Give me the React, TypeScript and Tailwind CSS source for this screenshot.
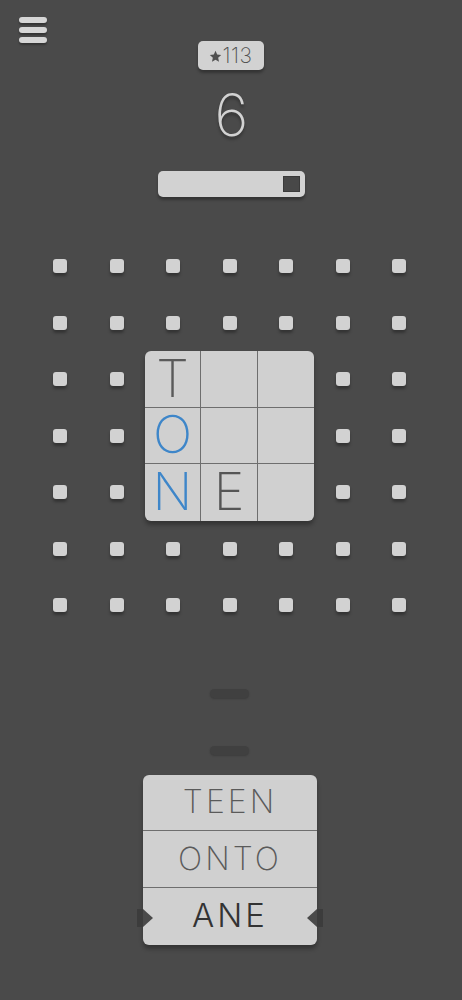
import React from "react";

const font = { fontFamily: "Inter, 'Open Sans', sans-serif" };

function Dot() {
  return <div className="w-[14px] h-[14px] rounded-[3px] bg-[#d2d2d2] shadow-[0_3px_3px_rgba(0,0,0,0.3)]" />;
}

export default function App() {
  const cells: React.ReactNode[] = [];
  for (let r = 0; r < 7; r++) {
    for (let c = 0; c < 7; c++) {
      if (r >= 2 && r <= 4 && c >= 2 && c <= 4) continue;
      cells.push(
        <div key={`${r}-${c}`} className="flex items-center justify-center" style={{ gridRow: r + 1, gridColumn: c + 1 }}>
          <Dot />
        </div>
      );
    }
  }
  const tiles: { ch: string; color: string }[] = [
    { ch: "T", color: "text-[#5a5a5a]" },
    { ch: "", color: "" },
    { ch: "", color: "" },
    { ch: "O", color: "text-[#3e86c9]" },
    { ch: "", color: "" },
    { ch: "", color: "" },
    { ch: "N", color: "text-[#3e86c9]" },
    { ch: "E", color: "text-[#555555]" },
    { ch: "", color: "" },
  ];
  return (
    <div className="relative w-full min-h-[1000px] bg-[#4a4a4a] flex flex-col items-center" style={font}>
      <button className="absolute left-[19px] top-[17px] flex flex-col gap-[4px]">
        <span className="block w-[28px] h-[6px] rounded-full bg-[#d6d6d6] shadow-[0_2px_2px_rgba(0,0,0,0.3)]" />
        <span className="block w-[28px] h-[6px] rounded-full bg-[#d6d6d6] shadow-[0_2px_2px_rgba(0,0,0,0.3)]" />
        <span className="block w-[28px] h-[6px] rounded-full bg-[#d6d6d6] shadow-[0_2px_2px_rgba(0,0,0,0.3)]" />
      </button>

      <div className="mt-[41px] ml-[-1px] w-[66px] h-[29px] rounded-[5px] bg-[#d2d2d2] shadow-[0_3px_3px_rgba(0,0,0,0.3)] flex items-center justify-center gap-[1px] text-[#505050]">
        <svg width="13" height="13" viewBox="0 0 24 24" className="mt-[1px]">
          <path d="M12 1.5l3.1 6.9 7.4.8-5.6 5 1.6 7.4L12 17.8 5.5 21.6l1.6-7.4-5.6-5 7.4-.8z" fill="#505050" />
        </svg>
        <span className="text-[21px] leading-none font-extralight tracking-[0.5px]">113</span>
      </div>

      <div className="mt-[16px] ml-[1px] text-[58px] leading-none font-extralight text-[#d2d2d2] [text-shadow:0_3px_3px_rgba(0,0,0,0.3)]">6</div>

      <div className="mt-[27px] ml-[1px] w-[147px] h-[26px] rounded-[5px] bg-[#d2d2d2] shadow-[0_3px_3px_rgba(0,0,0,0.3)] flex items-center justify-end pr-[5px]">
        <div className="w-[17px] h-[16px] bg-[#484848] border border-[#3a3a3a]" />
      </div>

      <div
        className="mt-[41px] ml-[-3px] grid"
        style={{ gridTemplateColumns: "repeat(7, 56.5px)", gridTemplateRows: "repeat(7, 56.5px)" }}
      >
        {cells}
        <div
          className="row-start-3 row-span-3 col-start-3 col-span-3 rounded-[6px] bg-[#d0d0d0] shadow-[0_4px_4px_rgba(0,0,0,0.3)] grid grid-cols-3 grid-rows-3"
        >
          {tiles.map((t, i) => (
            <div
              key={i}
              className={`flex items-center justify-center text-[52px] leading-none font-extralight ${t.color} ${i % 3 !== 2 ? "border-r border-[#6e6e6e]" : ""} ${i < 6 ? "border-b border-[#6e6e6e]" : ""}`}
            >
              {t.ch}
            </div>
          ))}
        </div>
      </div>

      <div className="mt-[55px] ml-[-3px] w-[39px] h-[9px] rounded-full bg-[#404040] shadow-[0_1px_2px_rgba(0,0,0,0.2)]" />
      <div className="mt-[48px] ml-[-3px] w-[39px] h-[9px] rounded-full bg-[#404040] shadow-[0_1px_2px_rgba(0,0,0,0.2)]" />

      <div className="relative mt-[20px] ml-[-2px] w-[174px] h-[170px] rounded-[6px] bg-[#d0d0d0] shadow-[0_4px_4px_rgba(0,0,0,0.3)] flex flex-col">
        <div className="h-[56px] flex items-center justify-center text-[32px] font-extralight tracking-[3px] text-[#5a5a5a] border-b border-[#6e6e6e]">TEEN</div>
        <div className="h-[57px] flex items-center justify-center text-[32px] font-extralight tracking-[3px] text-[#5a5a5a] border-b border-[#6e6e6e]">ONTO</div>
        <div className="flex-1 flex items-center justify-center text-[33px] font-light tracking-[3px] text-[#333333]">ANE</div>
        <div className="absolute left-[-6px] top-[134px] w-[6px] h-[18px] bg-[#3c3c3c]" />
        <div className="absolute left-0 top-[134px] w-0 h-0 border-y-[9px] border-y-transparent border-l-[10px] border-l-[#4a4a4a]" />
        <div className="absolute right-[-6px] top-[134px] w-[6px] h-[18px] bg-[#3c3c3c]" />
        <div className="absolute right-0 top-[134px] w-0 h-0 border-y-[9px] border-y-transparent border-r-[10px] border-r-[#4a4a4a]" />
      </div>
    </div>
  );
}
